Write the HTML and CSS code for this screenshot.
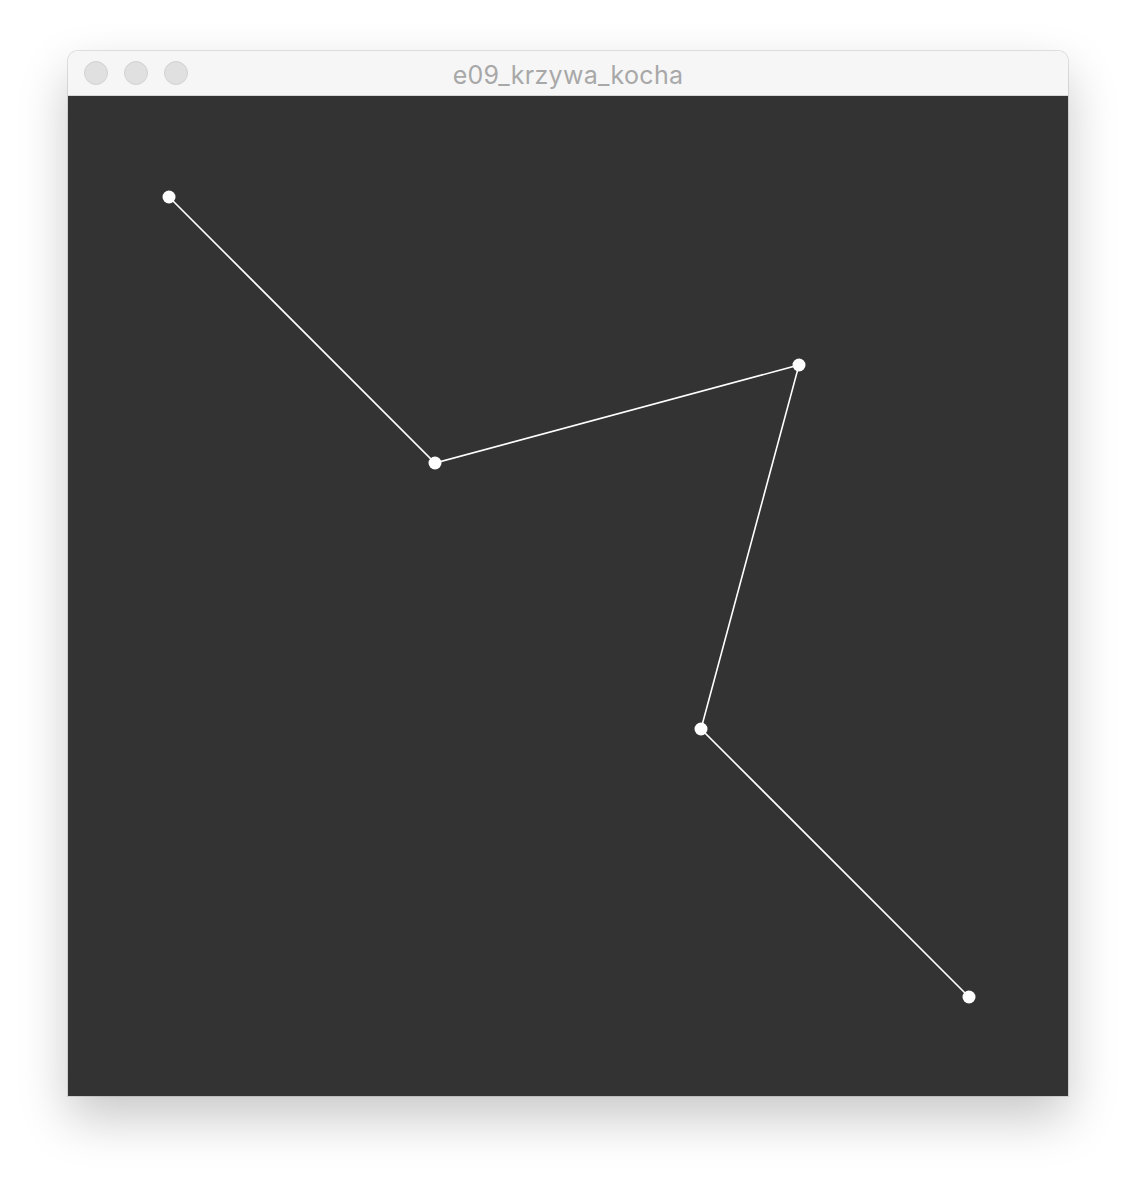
FILE: index.html
```html
<!DOCTYPE html>
<html>
<head>
<meta charset="utf-8">
<link rel="stylesheet" href="styles.css">
</head>
<body>
<div class="window">
  <div class="titlebar">
    <div class="lights">
      <span class="light"></span>
      <span class="light"></span>
      <span class="light"></span>
    </div>
    <div class="title">e09_krzywa_kocha</div>
  </div>
  <div class="canvas">
    <svg width="1000" height="1000" viewBox="0 0 1000 1000">
      <polyline points="101,101 367,367 731,269 633,633 901,901" fill="none" stroke="#ffffff" stroke-width="1.6"/>
      <circle cx="101" cy="101" r="6.5" fill="#fff"/>
      <circle cx="367" cy="367" r="6.5" fill="#fff"/>
      <circle cx="731" cy="269" r="6.5" fill="#fff"/>
      <circle cx="633" cy="633" r="6.5" fill="#fff"/>
      <circle cx="901" cy="901" r="6.5" fill="#fff"/>
    </svg>
  </div>
</div>
</body>
</html>
```
FILE: styles.css
```css
html, body {
  margin: 0;
  padding: 0;
  background: #ffffff;
}
body {
  padding: 51px 0 0 68px;
  min-height: 1180px;
  box-sizing: border-box;
  font-family: "Inter", "Liberation Sans", sans-serif;
}
.window {
  width: 1000px;
  border-radius: 10px 10px 0 0;
  box-shadow: 0 22px 50px rgba(0,0,0,0.22), 0 0 0 1px rgba(0,0,0,0.10);
}
.titlebar {
  height: 44px;
  background: #f6f6f6;
  border-radius: 10px 10px 0 0;
  border-bottom: 1px solid #d6d6d6;
  position: relative;
  display: flex;
  align-items: center;
  justify-content: center;
}
.lights {
  position: absolute;
  left: 16px;
  top: 10px;
  display: flex;
  gap: 16px;
}
.light {
  width: 24px;
  height: 24px;
  border-radius: 50%;
  background: #e0e0e0;
  border: 1px solid #d2d2d2;
  box-sizing: border-box;
  display: block;
}
.title {
  font-size: 25px;
  color: #a8a8a8;
  letter-spacing: 0.3px;
  margin-top: 4px;
}
.canvas {
  width: 1000px;
  height: 1000px;
  background: #333333;
}
.canvas svg {
  display: block;
}
```
